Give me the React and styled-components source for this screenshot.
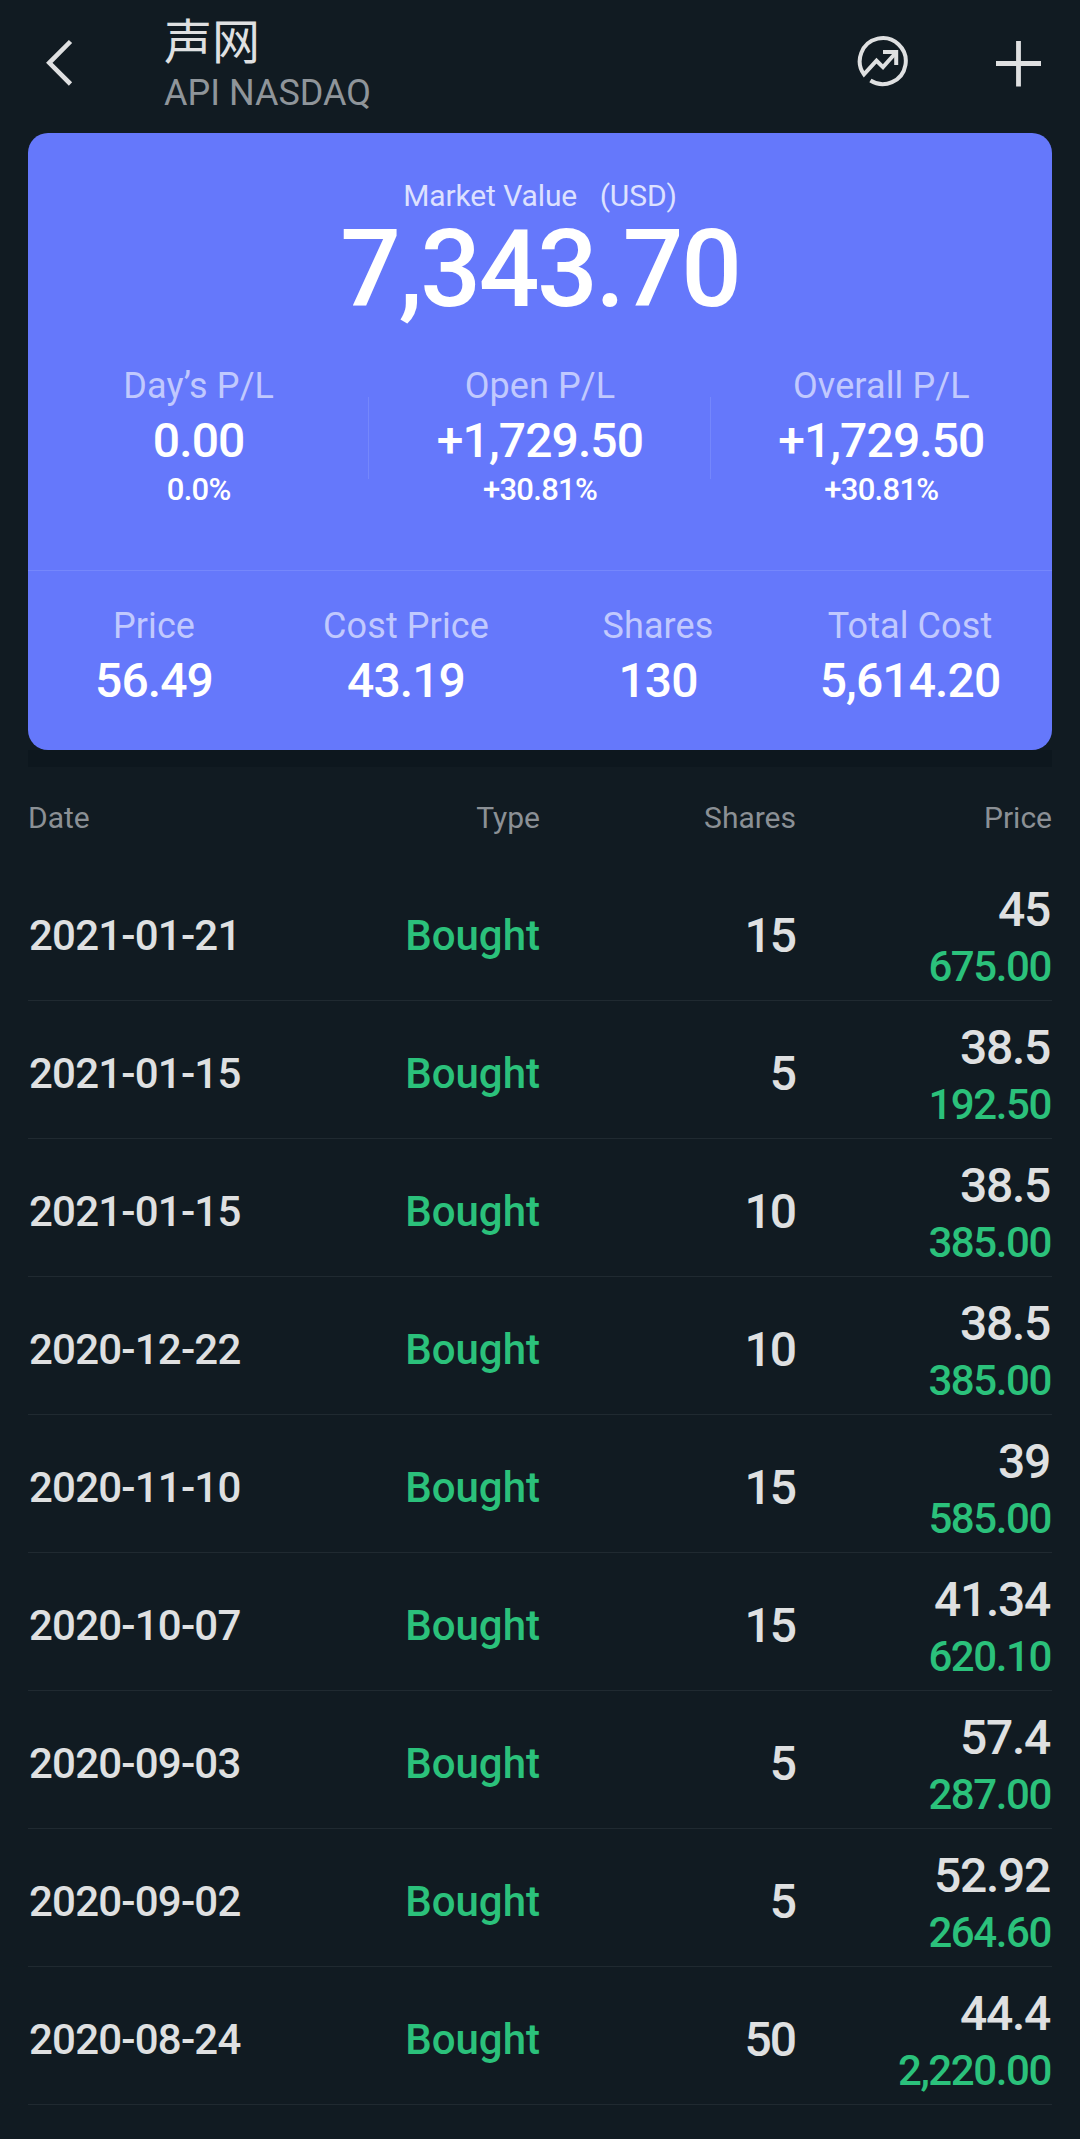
import React from 'react'
import styled, { createGlobalStyle, css } from 'styled-components'

const GlobalStyle = createGlobalStyle`
  * {
    box-sizing: border-box;
  }
  body {
    margin: 0;
    background: #111b22;
    font-family: Roboto, 'Noto Sans CJK SC', sans-serif;
  }
`

const figures = css`
  font-weight: 500;
  white-space: nowrap;
`

const Screen = styled.div`
  width: 1080px;
  height: 2139px;
  padding: 0 28px;
  overflow: hidden;
  background: #111b22;
  color: #dfe0e1;
`
const Header = styled.header`
  display: flex;
  height: 133px;
`
const Back = styled.svg`
  width: 28px;
  height: 48px;
  margin: 39px 0 0 17px;
`
const Titles = styled.div`
  flex: 1;
  padding: 10px 0 0 91px;
`
const Name = styled.h1`
  margin: 0;
  font: 400 48px/56px 'Noto Sans CJK SC', sans-serif;
`
const Ticker = styled.p`
  margin: 0;
  color: #8f959a;
  font-size: 36px;
  line-height: 54px;
`
const Actions = styled.div`
  display: flex;
  gap: 87px;
  padding: 35px 10px 0 0;
`
const ActionIcon = styled.svg`
  width: 52px;
  height: 54px;
  fill: none;
  stroke: #dfe0e1;
`
const PlusIcon = styled(ActionIcon)`
  width: 46px;
`

const Card = styled.section`
  height: 617px;
  padding-top: 45px;
  border-radius: 20px;
  background: #6578fb;
  color: #fff;
  text-align: center;
`
const Caption = styled.p`
  margin: 0;
  color: #dde1ff;
  font-size: 30px;
  line-height: 36px;
  letter-spacing: -0.1px;
`
const Total = styled.p`
  ${figures}
  margin: 0;
  font-size: 107px;
  line-height: 112px;
  letter-spacing: -2.4px;
`
const Profits = styled.div`
  display: flex;
  height: 245px;
  padding-top: 36px;
  border-bottom: 1px solid #7587fc;
`
const Divider = styled.div`
  width: 1px;
  height: 82px;
  margin: 35px 0 0 -1px;
  background: #7587fc;
`
const Stat = styled.div`
  flex: 1;
`
const Label = styled.p`
  margin: 0;
  color: #c1c9fe;
  font-size: 36px;
  line-height: 48px;
  letter-spacing: 0.1px;
`
const Value = styled.p`
  ${figures}
  margin: 0;
  font-size: 48px;
  line-height: 62px;
  letter-spacing: -0.9px;
`
const Percent = styled.p`
  ${figures}
  margin: 0;
  font-size: 31px;
  line-height: 36px;
  letter-spacing: -0.7px;
`
const Position = styled.div`
  display: grid;
  grid-template-columns: repeat(4, 252px);
  padding-top: 31px;
`
const Shade = styled.div`
  height: 17px;
  background: #0d171e;
`

const columns = css`
  display: grid;
  grid-template-columns: repeat(4, 256px);
  align-items: center;
  text-align: right;
  & > :first-child {
    text-align: left;
  }
`
const Heads = styled.div`
  ${columns}
  height: 96px;
  padding-top: 6px;
  color: #8b9095;
  font-size: 30px;
  line-height: 36px;
`
const Row = styled.div`
  ${columns}
  ${figures}
  height: 138px;
  border-bottom: 1px solid #202a31;
`
const Cell = styled.div`
  padding-top: 8px;
  font-size: 42px;
  line-height: 56px;
`
const DateCell = styled(Cell)`
  padding-left: 1px;
  letter-spacing: -0.8px;
`
const TypeCell = styled(Cell)`
  color: #2bc17b;
`
const SharesCell = styled(Cell)`
  padding-right: 1px;
  font-size: 48px;
  letter-spacing: -2px;
`
const Prices = styled.div`
  padding-top: 12px;
`
const Price = styled.div`
  padding-right: 2px;
  font-size: 48px;
  line-height: 58px;
  letter-spacing: -1.3px;
`
const Amount = styled.div`
  padding-right: 1px;
  color: #2bc17b;
  font-size: 42px;
  line-height: 55px;
  letter-spacing: -1.4px;
`

const profits = [
  { label: 'Day’s P/L', value: '0.00', percent: '0.0%' },
  { label: 'Open P/L', value: '+1,729.50', percent: '+30.81%' },
  { label: 'Overall P/L', value: '+1,729.50', percent: '+30.81%' },
]

const position = [
  { label: 'Price', value: '56.49' },
  { label: 'Cost Price', value: '43.19' },
  { label: 'Shares', value: '130' },
  { label: 'Total Cost', value: '5,614.20' },
]

const trades = [
  ['2021-01-21', 15, '45', '675.00'],
  ['2021-01-15', 5, '38.5', '192.50'],
  ['2021-01-15', 10, '38.5', '385.00'],
  ['2020-12-22', 10, '38.5', '385.00'],
  ['2020-11-10', 15, '39', '585.00'],
  ['2020-10-07', 15, '41.34', '620.10'],
  ['2020-09-03', 5, '57.4', '287.00'],
  ['2020-09-02', 5, '52.92', '264.60'],
  ['2020-08-24', 50, '44.4', '2,220.00'],
]

export default function App() {
  return (
    <Screen>
      <GlobalStyle />
      <Header>
        <Back viewBox="0 0 28 48" fill="none" stroke="#dfe0e1" strokeWidth="4.6">
          <path d="M25.5 2.5 4.3 23.8 25.5 45" />
        </Back>
        <Titles>
          <Name>声网</Name>
          <Ticker>API NASDAQ</Ticker>
        </Titles>
        <Actions>
          <ActionIcon viewBox="0 0 52 54" strokeWidth="4">
            <path d="M13.4 45.5A23 23 0 1 0 7 39.4L19.5 25.7 26 32.1 39 17.5" />
            <path d="M26 17.1H39.2V30.1" />
          </ActionIcon>
          <PlusIcon viewBox="0 0 46 54" strokeWidth="4.8">
            <path d="M0 28.5H45M22.5 6V51.5" />
          </PlusIcon>
        </Actions>
      </Header>

      <Card>
        <Caption>{'Market Value\u00a0\u2002(USD)'}</Caption>
        <Total>7,343.70</Total>
        <Profits>
          {profits.map((item, i) => (
            <React.Fragment key={item.label}>
              {i > 0 && <Divider />}
              <Stat>
                <Label>{item.label}</Label>
                <Value>{item.value}</Value>
                <Percent>{item.percent}</Percent>
              </Stat>
            </React.Fragment>
          ))}
        </Profits>
        <Position>
          {position.map((item) => (
            <div key={item.label}>
              <Label>{item.label}</Label>
              <Value>{item.value}</Value>
            </div>
          ))}
        </Position>
      </Card>
      <Shade />

      <Heads>
        <span>Date</span>
        <span>Type</span>
        <span>Shares</span>
        <span>Price</span>
      </Heads>
      {trades.map(([date, shares, price, amount], i) => (
        <Row key={i}>
          <DateCell>{date}</DateCell>
          <TypeCell>Bought</TypeCell>
          <SharesCell>{shares}</SharesCell>
          <Prices>
            <Price>{price}</Price>
            <Amount>{amount}</Amount>
          </Prices>
        </Row>
      ))}
    </Screen>
  )
}
